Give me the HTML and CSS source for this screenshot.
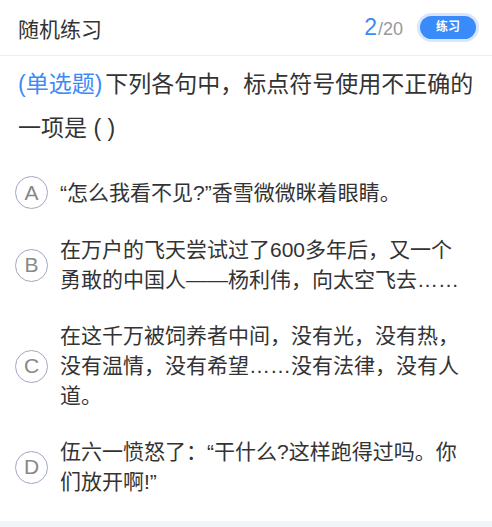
FILE: index.html
```html
<!DOCTYPE html>
<html lang="zh-CN">
<head>
  <meta charset="UTF-8" />
  <meta name="viewport" content="width=device-width, initial-scale=1.0"/>
  <title>随机练习</title>
  <link rel="stylesheet" href="styles.css">
</head>
<body>
  <div class="page">
    <header class="topbar">
      <h1 class="title">随机练习</h1>
      <div class="progress"><span class="current">2</span><span class="total">/20</span></div>
      <span class="tag">练习</span>
    </header>

    <div class="question">
      <span class="qtype">(单选题)</span>下列各句中，标点符号使用不正确的一项是 ( )
    </div>

    <ul class="options">
      <li class="option">
        <span class="letter">A</span>
        <span class="text">“怎么我看不见?”香雪微微眯着眼睛。</span>
      </li>
      <li class="option">
        <span class="letter">B</span>
        <span class="text">在万户的飞天尝试过了600多年后，又一个勇敢的中国人——杨利伟，向太空飞去……</span>
      </li>
      <li class="option">
        <span class="letter">C</span>
        <span class="text">在这千万被饲养者中间，没有光，没有热，没有温情，没有希望……没有法律，没有人道。</span>
      </li>
      <li class="option">
        <span class="letter">D</span>
        <span class="text">伍六一愤怒了：“干什么?这样跑得过吗。你们放开啊!”</span>
      </li>
    </ul>
  </div>
</body>
</html>
```

FILE: styles.css
```css
* {
  box-sizing: border-box;
}

body {
  margin: 0;
  padding: 0;
  font-family: "Liberation Sans", "Noto Sans CJK SC", sans-serif;
  background: #f2f5f8;
  color: #333;
}

.page {
  background: #fff;
}

.topbar {
  display: flex;
  align-items: center;
  height: 56px;
  padding: 0 16px 0 18px;
  border-bottom: 1px solid #eeeeee;
}

.title {
  flex: 1;
  margin: 0;
  font-size: 21px;
  font-weight: normal;
  color: #333;
}

.progress {
  margin-right: 17px;
}

.current {
  font-size: 23px;
  color: #3d8af7;
}

.total {
  font-size: 18px;
  color: #999;
  margin-left: 1px;
}

.tag {
  display: inline-block;
  width: 56px;
  height: 23px;
  line-height: 23px;
  text-align: center;
  border-radius: 12px;
  background: #3a8bfa;
  box-shadow: 0 0 0 3px #d8e7fd;
  color: #fff;
  font-size: 12px;
  font-weight: bold;
}

.question {
  padding: 6px 18px 0;
  font-size: 23px;
  line-height: 44px;
  color: #333;
}

.qtype {
  color: #3d8af7;
  margin-right: 3px;
}

.options {
  list-style: none;
  margin: 0;
  padding: 13px 26px 11px 15px;
}

.option {
  display: flex;
  align-items: center;
  padding: 13px 0;
}

.letter {
  flex: none;
  width: 33px;
  height: 33px;
  margin-right: 12px;
  border: 1px solid #a3a6c2;
  border-radius: 50%;
  display: flex;
  align-items: center;
  justify-content: center;
  font-size: 21px;
  color: #888;
}

.text {
  font-size: 21px;
  line-height: 30px;
  color: #333;
}
```
